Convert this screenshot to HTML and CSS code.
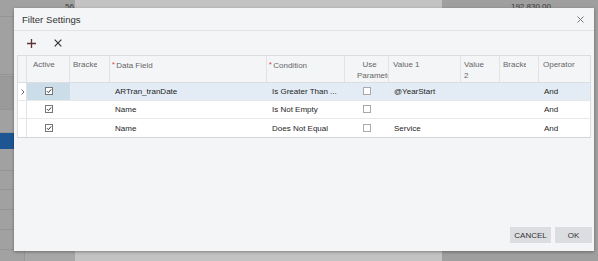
FILE: index.html
```html
<!DOCTYPE html>
<html>
<head>
<meta charset="utf-8">
<title>Filter Settings</title>
<link rel="stylesheet" href="styles.css">
</head>
<body>
<div class="app">
  <div class="col-left">
    <div class="lrow h17"><span class="num">56</span></div>
    <div class="lrow h58"></div>
    <div class="lrow h2"></div>
    <div class="lrow h33 dark"></div>
    <div class="lrow h23"></div>
    <div class="lrow h16 blue"></div>
    <div class="lrow h22"></div>
    <div class="lrow h19"></div>
    <div class="lrow h20"></div>
    <div class="lrow h20"></div>
    <div class="lrow h20"></div>
    <div class="lrow last"><div class="cell-a"></div><div class="cell-b"></div></div>
  </div>
  <div class="col-mid"></div>
  <div class="col-right"><span class="num">192,830.00</span></div>
</div>

<div class="dialog">
  <div class="titlebar">
    <span class="title">Filter Settings</span>
    <span class="close">
      <svg width="7" height="7" viewBox="0 0 7 7"><path d="M0.5 0.5L6.5 6.5M6.5 0.5L0.5 6.5" stroke="#777" stroke-width="1" fill="none"/></svg>
    </span>
  </div>
  <div class="toolbar">
    <span class="tb-btn">
      <svg width="9" height="9" viewBox="0 0 9 9"><path d="M4.5 0V9M0 4.5H9" stroke="#5e3434" stroke-width="1.3" fill="none"/></svg>
    </span>
    <span class="tb-btn">
      <svg width="8" height="8" viewBox="0 0 8 8"><path d="M0.7 0.7L7.3 7.3M7.3 0.7L0.7 7.3" stroke="#333" stroke-width="1.2" fill="none"/></svg>
    </span>
  </div>

  <div class="grid">
    <div class="row head">
      <div class="hc sel"></div>
      <div class="hc c-active"><span class="ht">Active</span></div>
      <div class="hc"><span class="ht">Bracket</span></div>
      <div class="hc c-req"><span class="ht"><span class="req">*</span>Data Field</span></div>
      <div class="hc c-req"><span class="ht"><span class="req">*</span>Condition</span></div>
      <div class="hc c-param"><span class="hw">Use Parameter</span></div>
      <div class="hc c-val"><span class="ht">Value 1</span></div>
      <div class="hc"><span class="hw">Value 2</span></div>
      <div class="hc"><span class="ht">Bracket</span></div>
      <div class="hc c-val last"><span class="ht">Operator</span></div>
    </div>

    <div class="row body current">
      <div class="bc sel">
        <svg width="4" height="6" viewBox="0 0 4 6"><path d="M0.5 0.5L3 3L0.5 5.5" stroke="#555" stroke-width="0.9" fill="none"/></svg>
      </div>
      <div class="bc center active-cell">
        <svg class="cb" width="8" height="8" viewBox="0 0 8 8"><rect x="0.5" y="0.5" width="7" height="7" fill="#fff" stroke="#777"/><path d="M2 4.2L3.4 5.6L6.2 2.4" stroke="#333" stroke-width="1" fill="none"/></svg>
      </div>
      <div class="bc"></div>
      <div class="bc">ARTran_tranDate</div>
      <div class="bc">Is Greater Than ...</div>
      <div class="bc center">
        <svg class="cb" width="8" height="8" viewBox="0 0 8 8"><rect x="0.5" y="0.5" width="7" height="7" fill="#fff" stroke="#a9a9a9"/></svg>
      </div>
      <div class="bc">@YearStart</div>
      <div class="bc"></div>
      <div class="bc"></div>
      <div class="bc">And</div>
    </div>

    <div class="row body">
      <div class="bc sel"></div>
      <div class="bc center">
        <svg class="cb" width="8" height="8" viewBox="0 0 8 8"><rect x="0.5" y="0.5" width="7" height="7" fill="#fff" stroke="#777"/><path d="M2 4.2L3.4 5.6L6.2 2.4" stroke="#333" stroke-width="1" fill="none"/></svg>
      </div>
      <div class="bc"></div>
      <div class="bc">Name</div>
      <div class="bc">Is Not Empty</div>
      <div class="bc center">
        <svg class="cb" width="8" height="8" viewBox="0 0 8 8"><rect x="0.5" y="0.5" width="7" height="7" fill="#fff" stroke="#a9a9a9"/></svg>
      </div>
      <div class="bc"></div>
      <div class="bc"></div>
      <div class="bc"></div>
      <div class="bc">And</div>
    </div>

    <div class="row body">
      <div class="bc sel"></div>
      <div class="bc center">
        <svg class="cb" width="8" height="8" viewBox="0 0 8 8"><rect x="0.5" y="0.5" width="7" height="7" fill="#fff" stroke="#777"/><path d="M2 4.2L3.4 5.6L6.2 2.4" stroke="#333" stroke-width="1" fill="none"/></svg>
      </div>
      <div class="bc"></div>
      <div class="bc">Name</div>
      <div class="bc">Does Not Equal</div>
      <div class="bc center">
        <svg class="cb" width="8" height="8" viewBox="0 0 8 8"><rect x="0.5" y="0.5" width="7" height="7" fill="#fff" stroke="#a9a9a9"/></svg>
      </div>
      <div class="bc">Service</div>
      <div class="bc"></div>
      <div class="bc"></div>
      <div class="bc">And</div>
    </div>
  </div>

  <div class="footer">
    <button class="btn cancel">CANCEL</button>
    <button class="btn ok">OK</button>
  </div>
</div>
</body>
</html>
```

FILE: styles.css
```css
html, body {
  margin: 0;
  padding: 0;
}
body {
  width: 598px;
  height: 261px;
  overflow: hidden;
  position: relative;
  font-family: "Liberation Sans", Arial, sans-serif;
  background: #a0a0a0;
}

/* dimmed background application */
.app {
  display: flex;
  height: 261px;
}
.col-left {
  width: 75px;
  display: flex;
  flex-direction: column;
  background: #a1a1a1;
}
.lrow {
  box-sizing: border-box;
  border-bottom: 1px solid #959595;
}
.lrow .num {
  display: block;
  text-align: right;
  padding: 2px 1px 0 0;
  font-size: 8px;
  line-height: 10px;
  color: #3a3a3a;
}
.h17 { height: 17px; }
.h58 { height: 58px; }
.h2 { height: 2px; }
.h33 { height: 33px; }
.h23 { height: 23px; }
.h16 { height: 16px; }
.h22 { height: 22px; }
.h19 { height: 19px; }
.h20 { height: 20px; }
.dark { background: #9a9a9a; }
.blue { background: #1e5593; border-bottom-color: #1e5593; }
.lrow.last {
  flex: 1;
  display: flex;
  border-bottom: none;
}
.cell-a { width: 24px; border-right: 1px solid #979797; background: #a2a2a2; }
.cell-b { flex: 1; background: #a7a7a7; }

.col-mid {
  width: 367px;
  background: #c3c3c3;
}
.col-right {
  flex: 1;
  background: #9f9f9f;
  text-align: right;
  padding: 2px 47px 0 0;
  font-size: 8px;
  line-height: 10px;
  color: #3a3a3a;
}

/* dialog */
.dialog {
  position: absolute;
  left: 14px;
  top: 8px;
  width: 580px;
  height: 243px;
  box-sizing: border-box;
  background: #f4f5f7;
  box-shadow: 0 1px 3px rgba(0, 0, 0, 0.35);
  display: flex;
  flex-direction: column;
}
.titlebar {
  box-sizing: border-box;
  height: 23px;
  border-bottom: 1px solid #e1e3e7;
  display: flex;
  align-items: center;
  justify-content: space-between;
  padding: 0 10px 0 8px;
}
.title {
  font-size: 9.6px;
  color: #333;
}
.close {
  display: flex;
  width: 7px;
  height: 7px;
}
.toolbar {
  height: 24px;
  display: flex;
  align-items: center;
  padding-left: 13px;
  gap: 18px;
}
.tb-btn {
  display: flex;
}

/* grid */
.grid {
  margin: 0 3px;
  border: 1px solid #dcdde0;
  border-bottom-color: #d4d5d8;
  background: #fff;
}
.row {
  display: grid;
  grid-template-columns: 9px 43px 40px 157px 78px 44px 72px 39px 39px 51px;
  box-sizing: border-box;
}
.row.head {
  height: 27px;
  background: #f4f5f7;
  border-bottom: 1px solid #dcdde0;
}
.hc {
  box-sizing: border-box;
  border-right: 1px solid #e2e3e6;
  padding: 4px 12px 0 3px;
  font-size: 8px;
  line-height: 10.5px;
  color: #666;
  min-width: 0;
}
.hc.last { border-right: none; }
.hc.sel { padding: 0; }
.hc.c-active { padding-left: 6px; }
.hc.c-req { padding-left: 2px; }
.hc.c-param {
  padding-left: 12px;
  padding-right: 6px;
  text-align: center;
  overflow: hidden;
}
.hc.c-val { padding-left: 4px; }
.ht {
  display: block;
  white-space: nowrap;
  overflow: hidden;
}
.hw {
  display: block;
}
.req {
  color: #e03030;
  font-size: 7px;
  margin-right: 1.5px;
  vertical-align: 1px;
}

.row.body {
  height: 18px;
  border-bottom: 1px solid #e7e8ea;
}
.row.body:last-child {
  border-bottom: none;
}
.row.current {
  background: #e3ecf4;
}
.bc {
  display: flex;
  align-items: center;
  padding-left: 5px;
  font-size: 8px;
  color: #1e1e1e;
  white-space: nowrap;
  overflow: hidden;
  min-width: 0;
}
.bc.sel {
  padding-left: 3px;
  background: #fff;
  border-right: 1px solid #e2e3e6;
}
.bc.center {
  justify-content: center;
  padding-left: 0;
}
.active-cell {
  background: #cadde9;
}
.cb {
  display: block;
  margin-top: -1px;
}

/* footer */
.footer {
  margin-top: auto;
  display: flex;
  justify-content: flex-end;
  gap: 4px;
  padding: 0 2px 8px 0;
}
.btn {
  height: 16px;
  border: none;
  border-radius: 0;
  background: #dcdde0;
  color: #333;
  font-family: "Liberation Sans", Arial, sans-serif;
  font-size: 8px;
  padding: 0;
  margin: 0;
}
.btn.cancel { width: 41px; }
.btn.ok { width: 37px; }
```
